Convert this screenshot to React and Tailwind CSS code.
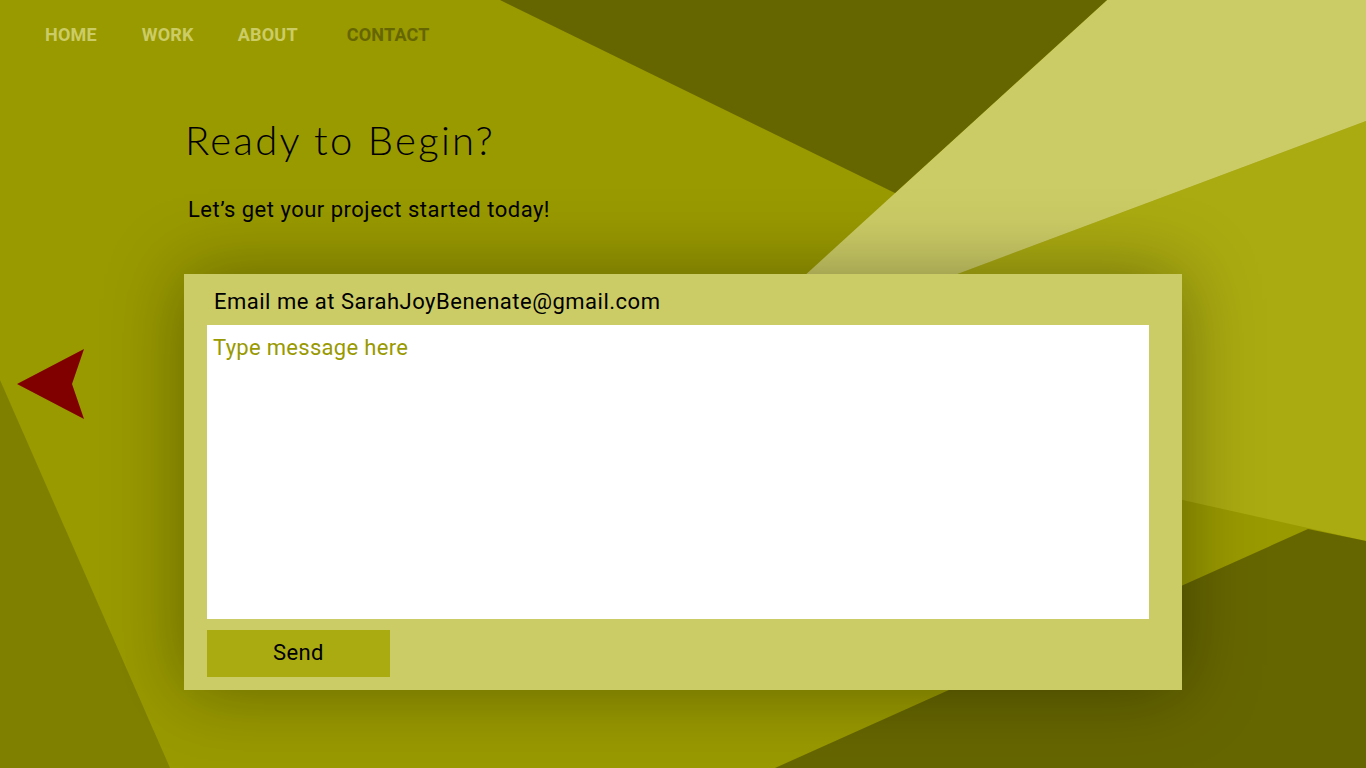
import React from 'react';

const NavLink = ({ label, active, className = '' }) => (
    <a href="#" className={`${active ? 'text-[#666600]' : 'text-[#cccc66]'} ${className}`}>
        {label}
    </a>
);

const Background = () => (
    <svg className="absolute inset-0" width="1366" height="768" viewBox="0 0 1366 768" aria-hidden="true">
        <polygon points="0,380 170,768 0,768" fill="#808000" />
        <polygon points="1366,121 1366,541 663,384" fill="#aaaa11" />
        <polygon points="1107,0 1366,0 1366,121 701,370" fill="#cccc66" />
        <polygon points="500,0 1107,0 895,193" fill="#666600" />
        <polygon points="1308,529 1366,541 1366,768 775,768" fill="#666600" />
    </svg>
);

const App = () => {
    return (
        <div className="relative h-[768px] w-full overflow-hidden bg-[#999900] font-['Roboto',sans-serif] text-black">
            <Background />

            {/* top nav */}
            <nav className="relative flex pl-[45px] pt-[26px] text-[18px] font-bold leading-[18px] tracking-[0.2px]">
                <NavLink label="HOME" />
                <NavLink label="WORK" className="ml-[45px]" />
                <NavLink label="ABOUT" className="ml-[44px]" />
                <NavLink label="CONTACT" active className="ml-[49px]" />
            </nav>

            {/* back arrow */}
            <button className="absolute left-[17px] top-[349px]" aria-label="Back">
                <svg width="67" height="70" viewBox="0 0 67 70">
                    <polygon points="0,35 67,0 55,35 67,70" fill="#800000" />
                </svg>
            </button>

            <main className="relative pl-[184px]">
                <h1 className="ml-[1px] mt-[76px] font-['Lato',sans-serif] text-[40px] font-light leading-[40px] tracking-[2.3px]">
                    Ready to Begin?
                </h1>
                <p className="ml-[4px] mt-[40px] text-[22px] leading-5 tracking-[0.5px]">Let’s get your project started today!</p>

                <form className="mt-[54px] flex h-[416px] w-[998px] flex-col bg-[#cccc66] pb-[13px] pl-[23px] pr-[33px] pt-[18px] shadow-[0_0_70px_rgba(0,0,0,0.35)]">
                    <label htmlFor="msg" className="ml-[7px] text-[22px] leading-5 tracking-[0.5px]">
                        Email me at SarahJoyBenenate@gmail.com
                    </label>
                    <textarea
                        id="msg"
                        placeholder="Type message here"
                        className="mt-[13px] h-[294px] w-full resize-none border-0 bg-white pl-[6px] pt-[11px] text-[22px] leading-6 tracking-[0.3px] outline-none placeholder:text-[#999900]"
                    />
                    <button type="button" className="mt-[11px] h-[47px] w-[183px] bg-[#aaaa11] pb-[3px] text-[22px] tracking-[0.4px]">
                        Send
                    </button>
                </form>
            </main>
        </div>
    );
};

export default App;
